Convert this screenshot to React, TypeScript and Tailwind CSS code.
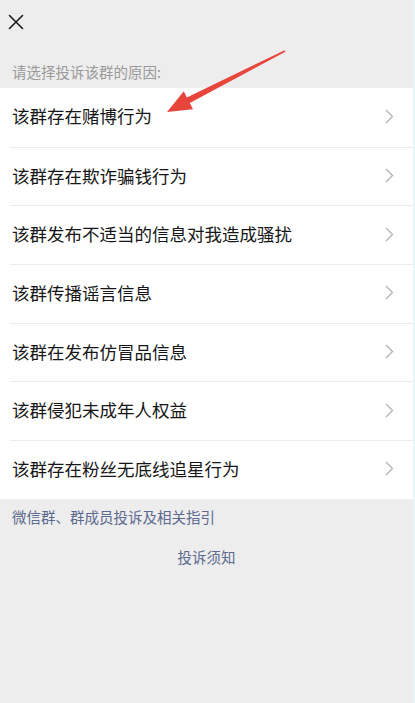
import React from "react";

const items = [
  "该群存在赌博行为",
  "该群存在欺诈骗钱行为",
  "该群发布不适当的信息对我造成骚扰",
  "该群传播谣言信息",
  "该群在发布仿冒品信息",
  "该群侵犯未成年人权益",
  "该群存在粉丝无底线追星行为",
];

function Chevron() {
  return (
    <svg width="9" height="15" viewBox="0 0 9 15" fill="none">
      <polyline points="1,1 7.5,7.5 1,14" stroke="#b5b5b5" strokeWidth="1.4" strokeLinejoin="miter" fill="none" />
    </svg>
  );
}

export default function App() {
  return (
    <div
      className="relative flex h-[703px] w-[415px] overflow-hidden bg-[#e9f6f9]"
      style={{ fontFamily: '"Noto Sans CJK SC", "Noto Sans", sans-serif' }}
    >
      <div className="flex h-full w-[413px] flex-col bg-[#ededed]">
        <div className="flex h-[42px] items-center pl-[8px] pt-[1px]">
          <svg width="16" height="16" viewBox="0 0 16 16">
            <path d="M1.5 1.5 L14.5 14.5 M14.5 1.5 L1.5 14.5" stroke="#1c1c1c" strokeWidth="1.6" strokeLinecap="round" />
          </svg>
        </div>
        <div className="h-[46px] pl-[12px] pt-[20px] text-[14.5px] leading-[20px] text-[#9a9a9a]">
          请选择投诉该群的原因:
        </div>
        <div className="flex flex-col bg-white">
          {items.map((t, i) => (
            <div key={t} className="h-[58.7px] pl-[10px]">
              <div
                className={
                  "flex h-full items-center justify-between pb-[2px] pl-[2px] pr-[19px] " +
                  (i > 0 ? "border-t border-[#ececec]" : "")
                }
              >
                <span className="text-[17.5px] leading-[24px] text-[#161616]">{t}</span>
                <Chevron />
              </div>
            </div>
          ))}
        </div>
        <div className="pl-[12px] pt-[8px] text-[14.5px] leading-[20px] text-[#5b6a8e]">
          微信群、群成员投诉及相关指引
        </div>
        <div className="mt-[20px] text-center text-[14.5px] leading-[20px] text-[#5b6a8e]">
          投诉须知
        </div>
      </div>
      <svg className="absolute left-0 top-0" width="415" height="703" viewBox="0 0 415 703">
        <polygon
          points="167,112 183.8,91.2 186.8,97.4 284.6,50.3 285.4,51.7 189.8,103 193,109.2"
          fill="#e8453c"
        />
      </svg>
    </div>
  );
}
